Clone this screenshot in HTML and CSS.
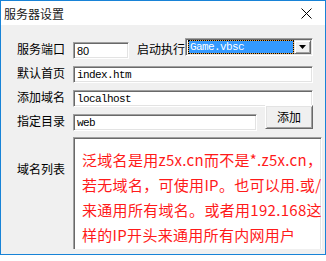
FILE: index.html
```html
<!DOCTYPE html>
<html lang="zh-CN">

<head>
    <meta charset="UTF-8">
    <title>服务器设置</title>
    <link rel="stylesheet" href="styles.css">
</head>

<body>
    <!-- 窗口 -->
    <div class="win">
        <!-- 标题栏 -->
        <div class="titleBar">
            <span class="titleText">服务器设置</span>
            <svg class="closeBtn" width="11" height="11" viewBox="0 0 11 11">
                <path d="M0.5 0.5 L10.5 10.5 M10.5 0.5 L0.5 10.5" stroke="#000" stroke-width="1" fill="none" />
            </svg>
        </div>
        <!-- 内容 -->
        <div class="client">
            <div class="row rowFirst">
                <div class="lbl">服务端口</div>
                <div class="field fieldPort">80</div>
                <div class="lbl lblRun">启动执行</div>
                <div class="combo">
                    <div class="comboText">Game.vbsc</div>
                    <div class="comboBtn">
                        <svg width="7" height="4" viewBox="0 0 7 4">
                            <path d="M0 0 H7 L3.5 4 Z" fill="#000" />
                        </svg>
                    </div>
                </div>
            </div>
            <div class="row">
                <div class="lbl">默认首页</div>
                <div class="field fieldWide">index.htm</div>
            </div>
            <div class="row">
                <div class="lbl">添加域名</div>
                <div class="field fieldWide">localhost</div>
            </div>
            <div class="row">
                <div class="lbl">指定目录</div>
                <div class="field fieldDir">web</div>
                <div class="btn">添加</div>
            </div>
            <div class="row rowList">
                <div class="lbl lblList">域名列表</div>
                <div class="memo">
                    <div>泛域名是用z5x.cn而不是*.z5x.cn，</div>
                    <div>若无域名，可使用IP。也可以用.或/</div>
                    <div>来通用所有域名。或者用192.168这</div>
                    <div>样的IP开头来通用所有内网用户</div>
                </div>
            </div>
        </div>
    </div>
</body>

</html>
```

FILE: styles.css
```css
* {
    margin: 0;
    padding: 0;
    box-sizing: border-box;
}

body {
    background: #fff;
    font-family: "Noto Sans CJK SC", sans-serif;
    font-size: 12px;
    color: #000;
}

.win {
    width: 326px;
    height: 255px;
    border: 1px solid #1883d7;
    background: #f0f0f0;
    display: flex;
    flex-direction: column;
}

.titleBar {
    height: 24px;
    background: #fff;
    display: flex;
    align-items: center;
    justify-content: space-between;
    padding: 0 13px 0 3px;
}

.titleText {
    line-height: 24px;
    font-size: 12px;
    color: #1a1a1a;
    margin-top: 1px;
}

.closeBtn {
    display: block;
    margin-top: 1px;
}

.client {
    flex: 1;
    overflow: hidden;
    margin-bottom: 5px;
    padding: 13px 0 0 16px;
}

.row {
    display: flex;
    align-items: flex-start;
    margin-top: 7px;
}

.rowFirst {
    margin-top: 0;
    padding-top: 4px;
}

.lbl {
    width: 56px;
    line-height: 17px;
    margin-top: -2px;
    white-space: nowrap;
}

.lblRun {
    width: auto;
    margin-left: 8px;
    margin-right: 0;
}

/* 凹下去的输入框 */
.field {
    height: 17px;
    background: #fff;
    border-top: 1px solid #a0a0a0;
    border-left: 1px solid #a0a0a0;
    border-bottom: 1px solid #fff;
    border-right: 1px solid #fff;
    box-shadow: inset 1px 1px 0 #696969, inset -1px -1px 0 #e3e3e3;
    padding: 0 0 0 3px;
    font-family: "Liberation Mono", monospace;
    font-size: 11px;
    letter-spacing: -0.6px;
    line-height: 16px;
    white-space: nowrap;
    overflow: hidden;
}

.fieldPort {
    width: 56px;
    font-family: "Liberation Sans", sans-serif;
    letter-spacing: 0;
}

.fieldWide {
    width: 240px;
}

.fieldDir {
    width: 184px;
}

.combo {
    width: 128px;
    height: 18px;
    margin-top: -4px;
    border-top: 1px solid #a0a0a0;
    border-left: 1px solid #a0a0a0;
    border-bottom: 1px solid #fff;
    border-right: 1px solid #fff;
    box-shadow: inset 1px 1px 0 #696969, inset -1px -1px 0 #e3e3e3;
    background: #fff;
    display: flex;
    padding: 1px 1px 1px 2px;
}

.comboText {
    flex: 1;
    border: 1px dotted #000;
    background: linear-gradient(#3399ff, #3399ff) padding-box, #e8a040 border-box;
    color: #fff;
    font-family: "Liberation Mono", monospace;
    font-size: 11px;
    letter-spacing: -0.6px;
    line-height: 13px;
    padding-left: 1px;
    white-space: nowrap;
    overflow: hidden;
}

.comboBtn {
    width: 17px;
    background: #f0f0f0;
    border-top: 1px solid #e3e3e3;
    border-left: 1px solid #e3e3e3;
    border-bottom: 1px solid #696969;
    border-right: 1px solid #696969;
    box-shadow: inset 1px 1px 0 #fff, inset -1px -1px 0 #a0a0a0;
    display: flex;
    align-items: center;
    justify-content: center;
}

.comboBtn svg {
    display: block;
}

/* 凸起的按钮 */
.btn {
    width: 48px;
    height: 24px;
    margin: -9px 0 0 8px;
    border-top: 1px solid #fff;
    border-left: 1px solid #fff;
    border-bottom: 1px solid #696969;
    border-right: 1px solid #696969;
    box-shadow: inset 1px 1px 0 #e3e3e3, inset -1px -1px 0 #a0a0a0;
    background: #f0f0f0;
    text-align: center;
    line-height: 21px;
    font-size: 12px;
}

.rowList {
    margin-top: 6px;
}

.lblList {
    margin-top: 23px;
}

.memo {
    width: 249px;
    height: 130px;
    flex-shrink: 0;
    background: #fff;
    border-top: 1px solid #a0a0a0;
    border-left: 1px solid #a0a0a0;
    border-bottom: 1px solid #fff;
    border-right: 1px solid #fff;
    box-shadow: inset 1px 1px 0 #696969, inset -1px -1px 0 #e3e3e3;
    padding: 9px 0 0 8px;
    color: #ff1a1a;
    font-size: 15px;
    letter-spacing: 0.3px;
    line-height: 25px;
    white-space: nowrap;
    overflow: hidden;
}
```
